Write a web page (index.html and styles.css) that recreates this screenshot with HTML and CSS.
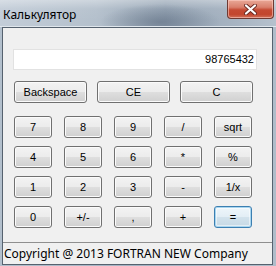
FILE: index.html
```html
<!DOCTYPE html>
<html>
<head>
<meta charset="utf-8">
<link rel="stylesheet" href="styles.css">
</head>
<body>
<div class="window">
  <div class="titlebar">
    <span class="title">Калькулятор</span>
    <button class="close" aria-label="Закрыть">
      <svg width="13" height="11" viewBox="0 0 13 11">
        <path d="M2 1.5 L11 9.5 M11 1.5 L2 9.5" stroke="#6b2a22" stroke-width="4" stroke-linecap="round"/>
        <path d="M2 1.5 L11 9.5 M11 1.5 L2 9.5" stroke="#ffffff" stroke-width="2.2" stroke-linecap="round"/>
      </svg>
    </button>
  </div>
  <div class="client">
    <div class="display">98765432</div>
    <div class="toprow">
      <button class="btn">Backspace</button>
      <button class="btn">CE</button>
      <button class="btn">C</button>
    </div>
    <div class="keypad">
      <button class="btn">7</button>
      <button class="btn">8</button>
      <button class="btn">9</button>
      <button class="btn">/</button>
      <button class="btn">sqrt</button>
      <button class="btn">4</button>
      <button class="btn">5</button>
      <button class="btn">6</button>
      <button class="btn">*</button>
      <button class="btn">%</button>
      <button class="btn">1</button>
      <button class="btn">2</button>
      <button class="btn">3</button>
      <button class="btn">-</button>
      <button class="btn">1/x</button>
      <button class="btn">0</button>
      <button class="btn">+/-</button>
      <button class="btn">,</button>
      <button class="btn">+</button>
      <button class="btn default">=</button>
    </div>
    <div class="status">Copyright @ 2013 FORTRAN NEW Company</div>
  </div>
</div>
</body>
</html>
```
FILE: styles.css
```css
* { box-sizing: border-box; }
html, body { margin: 0; padding: 0; }
body { width: 276px; height: 266px; overflow: hidden; background: #a9b8c7; }

.window {
  width: 276px;
  height: 266px;
  display: flex;
  flex-direction: column;
  padding: 0 3px 1px 2px;
  background: linear-gradient(90deg, #b3c0cd 0%, #a3b2c2 50%, #b0bdca 100%);
}

.titlebar {
  height: 27px;
  flex: none;
  display: flex;
  align-items: flex-start;
  margin: 0 -3px 0 -2px;
  padding-left: 3px;
  background:
    radial-gradient(ellipse 60px 18px at 160px 22px, rgba(90,105,125,0.55), rgba(90,105,125,0) 100%),
    linear-gradient(180deg, rgba(255,255,255,0.35) 0px, rgba(255,255,255,0.05) 9px, rgba(0,0,0,0) 20px),
    linear-gradient(90deg, #c3cdd8 0%, #b4c0cc 35%, #95a4b4 60%, #a7b4c2 85%, #b6c1cd 100%);
  border-bottom: 1px solid #dfe6ec;
}

.title {
  font-family: "Noto Sans", "Open Sans", sans-serif;
  font-size: 12px;
  line-height: 16px;
  margin-top: 7px;
  color: #000;
}

.close {
  margin-left: auto;
  margin-right: 2px;
  width: 47px;
  height: 19px;
  padding: 0;
  border: 1px solid #6e3a33;
  border-top: none;
  border-radius: 0 0 4px 4px;
  background: linear-gradient(180deg, #e9a897 0%, #d9806d 40%, #c54a33 55%, #c2462e 80%, #d0715a 100%);
  box-shadow: inset 0 0 0 1px rgba(255,210,200,0.55);
  display: flex;
  align-items: center;
  justify-content: center;
}
.close svg { display: block; margin-top: 1px; }

.client {
  flex: 1;
  border: 1px solid #56626f;
  background: #f0f0f0;
  display: flex;
  flex-direction: column;
  font-family: "Liberation Sans", Arial, sans-serif;
  font-size: 11px;
}

.display {
  margin: 21px 0 0 10px;
  width: 244px;
  height: 21px;
  background: #fff;
  border: 1px solid #e2e2e2;
  text-align: right;
  padding-right: 2px;
  line-height: 19px;
  color: #000;
}

.btn {
  font-family: "Liberation Sans", Arial, sans-serif;
  font-size: 11px;
  color: #000;
  height: 22px;
  padding: 0;
  border: 1px solid #707070;
  border-radius: 3px;
  background: linear-gradient(180deg, #f3f3f3 0%, #ececec 48%, #dedede 52%, #d0d0d0 100%);
  box-shadow: inset 0 0 0 1px #fbfbfb;
  line-height: 20px;
}

.toprow {
  margin: 11px 0 0 11px;
  display: flex;
  gap: 10px;
}
.toprow .btn { width: 73px; }

.keypad {
  margin: 13px 0 0 11px;
  display: grid;
  grid-template-columns: repeat(5, 38px);
  grid-auto-rows: 22px;
  column-gap: 12px;
  row-gap: 8px;
}

.btn.default {
  border-color: #3c7fb1;
  background: linear-gradient(180deg, #eef6fb 0%, #e3eef5 48%, #d2e2ec 52%, #c6d9e5 100%);
  box-shadow: inset 0 0 0 1px #a8d6f0, inset 0 0 0 2px rgba(255,255,255,0.5);
}

.status {
  margin-top: auto;
  height: 22px;
  border-top: 1px solid #8f8f8f;
  font-family: "Noto Sans", "Open Sans", sans-serif;
  font-size: 12px;
  line-height: 21px;
  padding-left: 1px;
  color: #000;
}
```
